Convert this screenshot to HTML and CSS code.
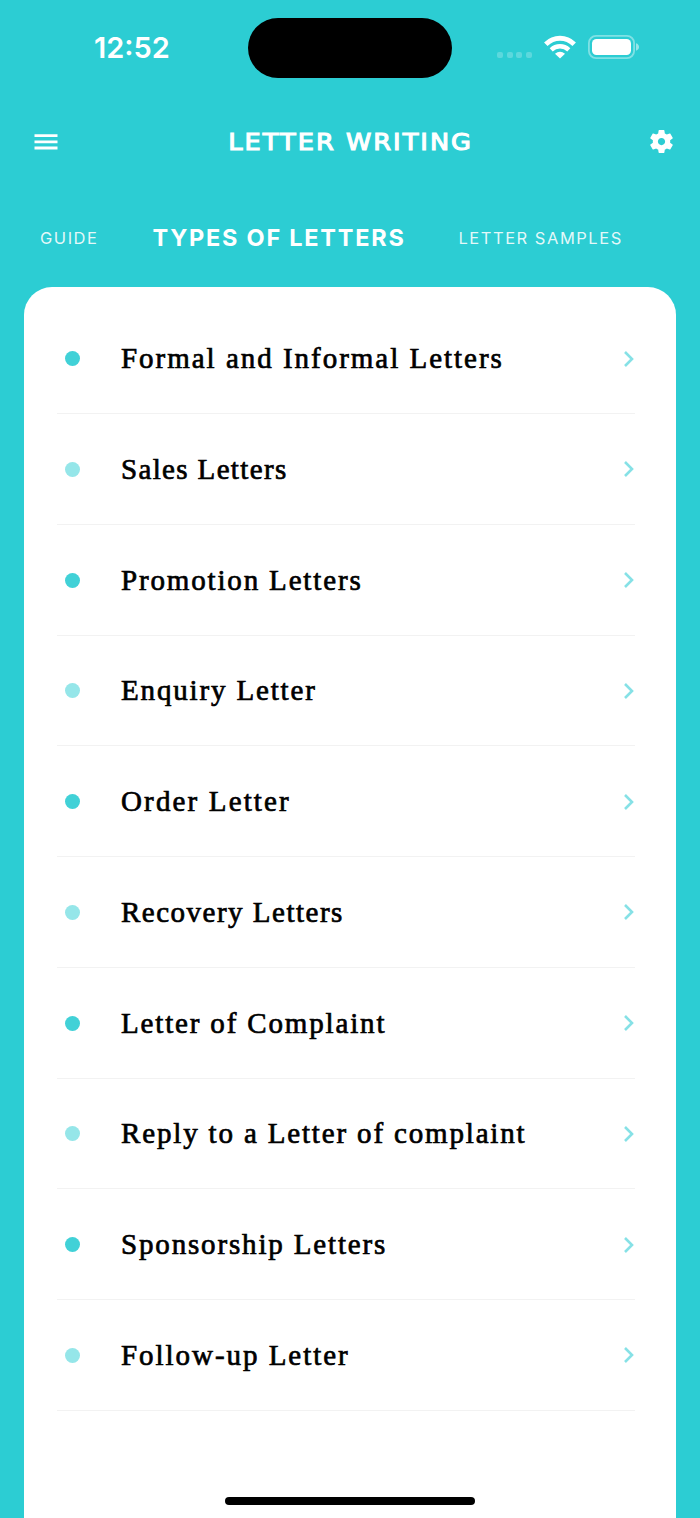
FILE: index.html
```html
<!DOCTYPE html>
<html lang="en">
<head>
<meta charset="utf-8">
<title>Letter Writing</title>
<link rel="stylesheet" href="styles.css">
</head>
<body>
<svg width="0" height="0" class="defs"><defs><symbol id="chev" viewBox="0 0 12 18"><path d="M2 2L9 9L2 16" fill="none" stroke="currentColor" stroke-width="2.6"/></symbol></defs></svg>
<div class="status">
  <div class="time">12:52</div>
  <div class="island"></div>
  <div class="indicators">
    <div class="signal"><i></i><i></i><i></i><i></i></div>
    <svg class="wifi" width="32" height="24" viewBox="0 0 32 24" fill="none" stroke="#fff"><path d="M1.8 9.2C10 1.3 22 1.3 30.2 9.2" stroke-width="5"/><path d="M7.2 14.8C12.2 10 19.8 10 24.8 14.8" stroke-width="4.4"/><path d="M16 23.6L11 18.8Q16 14.6 21 18.8Z" fill="#fff" stroke="none"/></svg>
    <svg class="battery" width="51" height="24" viewBox="0 0 51 24"><rect x=".9" y=".9" width="45.2" height="22.2" rx="7.2" fill="none" stroke="#fff" stroke-opacity=".4" stroke-width="1.8"/><rect x="4" y="4" width="39" height="16" rx="4.5" fill="#fff"/><path d="M48 8.3Q51 9.3 51 12T48 15.7Z" fill="#fff" fill-opacity=".5"/></svg>
  </div>
</div>
<header class="bar">
  <svg width="24" height="18" viewBox="0 0 24 18"><path d="M.5 2.7H23.5M.5 8.8H23.5M.5 15H23.5" stroke="#fff" stroke-width="2.8"/></svg>
  <h1>LETTER WRITING</h1>
  <svg class="gear" width="29" height="29" viewBox="0 0 24 24" fill="#fff"><path d="M19.14 12.94c.04-.3.06-.61.06-.94 0-.32-.02-.64-.07-.94l2.03-1.58c.18-.14.23-.41.12-.61l-1.92-3.32c-.12-.22-.37-.29-.59-.22l-2.39.96c-.5-.38-1.03-.7-1.62-.94l-.36-2.54c-.04-.24-.24-.41-.48-.41h-3.84c-.24 0-.43.17-.47.41l-.36 2.54c-.59.24-1.13.57-1.62.94l-2.39-.96c-.22-.08-.47 0-.59.22L2.74 8.87c-.12.21-.08.47.12.61l2.03 1.58c-.05.3-.09.63-.09.94s.02.64.07.94l-2.03 1.58c-.18.14-.23.41-.12.61l1.92 3.32c.12.22.37.29.59.22l2.39-.96c.5.38 1.03.7 1.62.94l.36 2.54c.05.24.24.41.48.41h3.84c.24 0 .44-.17.47-.41l.36-2.54c.59-.24 1.13-.56 1.62-.94l2.39.96c.22.08.47 0 .59-.22l1.92-3.32c.12-.22.07-.47-.12-.61l-2.01-1.58zM12 15c-1.66 0-3-1.34-3-3s1.34-3 3-3 3 1.34 3 3-1.34 3-3 3z"/></svg>
</header>
<nav class="tabs"><span class="tab">GUIDE</span><span class="tab active">TYPES OF LETTERS</span><span class="tab samples">LETTER SAMPLES</span></nav>
<main class="card">
  <ul class="list">
    <li class="row"><i class="dot"></i><span class="label">Formal and Informal Letters</span><svg class="chev"><use href="#chev"/></svg></li>
    <li class="row"><i class="dot"></i><span class="label">Sales Letters</span><svg class="chev"><use href="#chev"/></svg></li>
    <li class="row"><i class="dot"></i><span class="label">Promotion Letters</span><svg class="chev"><use href="#chev"/></svg></li>
    <li class="row"><i class="dot"></i><span class="label">Enquiry Letter</span><svg class="chev"><use href="#chev"/></svg></li>
    <li class="row"><i class="dot"></i><span class="label">Order Letter</span><svg class="chev"><use href="#chev"/></svg></li>
    <li class="row"><i class="dot"></i><span class="label">Recovery Letters</span><svg class="chev"><use href="#chev"/></svg></li>
    <li class="row"><i class="dot"></i><span class="label">Letter of Complaint</span><svg class="chev"><use href="#chev"/></svg></li>
    <li class="row"><i class="dot"></i><span class="label">Reply to a Letter of complaint</span><svg class="chev"><use href="#chev"/></svg></li>
    <li class="row"><i class="dot"></i><span class="label">Sponsorship Letters</span><svg class="chev"><use href="#chev"/></svg></li>
    <li class="row"><i class="dot"></i><span class="label">Follow-up Letter</span><svg class="chev"><use href="#chev"/></svg></li>
  </ul>
  <div class="home"></div>
</main>
</body>
</html>
```
FILE: styles.css
```css
* { box-sizing: border-box; }
body { margin: 0; width: 700px; height: 1518px; overflow: hidden; background: #2ccdd3; color: #fff; font-family: Inter, "Liberation Sans", sans-serif; display: flex; flex-direction: column; }
.defs { position: absolute; }
.status { height: 96px; flex: none; display: grid; grid-template-columns: 248px 204px 248px; }
.time { padding: 30px 0 0 94px; font-size: 29px; line-height: 36px; font-weight: 600; letter-spacing: 0; }
.island { margin-top: 18px; height: 60px; border-radius: 30px; background: #000; }
.indicators { display: flex; align-items: flex-start; padding: 35px 0 0 45px; }
.signal { display: flex; gap: 3.7px; padding-top: 17px; width: 47px; }
.signal i { width: 6px; height: 6px; border-radius: 2px; background: rgba(255,255,255,.23); }
.wifi { margin-top: -.5px; }
.battery { margin-left: 12px; }
.bar { height: 92px; flex: none; display: flex; align-items: center; justify-content: space-between; padding: 0 25px 0 33.5px; }
.bar h1 { margin: 0 3px 0 0; font: 22.5px/30px "DejaVu Sans", sans-serif; letter-spacing: 1.8px; -webkit-text-stroke: 1.1px #fff; transform: scaleX(1.137); }
.gear { margin: 0 -.5px 1.5px 0; }
.tabs { height: 98.5px; flex: none; display: flex; align-items: center; padding: 0 0 0 40px; white-space: nowrap; }
.tab { font-size: 16.5px; line-height: 30px; letter-spacing: 1.52px; color: rgba(255,255,255,.88); width: 112.5px; padding-top: 2px; }
.tab.active { font-size: 23.5px; font-weight: 700; letter-spacing: 1.75px; color: #fff; width: 306px; padding-top: 1px; }
.card { flex: 1; margin: 0 24px; background: #fff; border-radius: 28px 28px 0 0; padding: 16.75px 41px 0 33px; }
.list { list-style: none; margin: 0; padding: 0; }
.row { height: 110.75px; border-bottom: 1.5px solid #f2f2f2; display: flex; align-items: center; padding: 0 0 0 8px; }
.dot { width: 15px; height: 15px; border-radius: 50%; background: #41d1d7; margin-top: 1px; }
.row:nth-child(even) .dot { background: #95e6e9; }
.label { flex: 1; padding-left: 41px; color: #000; font: 29px/40px "Liberation Serif", serif; letter-spacing: 1.84px; -webkit-text-stroke: .7px #000; white-space: nowrap; }
.row:nth-child(1) .label { letter-spacing: 1.98px; }
.row:nth-child(2) .label { letter-spacing: 1.35px; }
.row:nth-child(5) .label { letter-spacing: 2.15px; }
.row:nth-child(6) .label { letter-spacing: 1.5px; }
.row:nth-child(10) .label { letter-spacing: 1.96px; }
.chev { width: 12px; height: 18px; color: #86e1e6; margin-top: 1px; }
.home { width: 250px; height: 8px; border-radius: 4px; background: #000; margin: 86px 0 0 168px; }
```
